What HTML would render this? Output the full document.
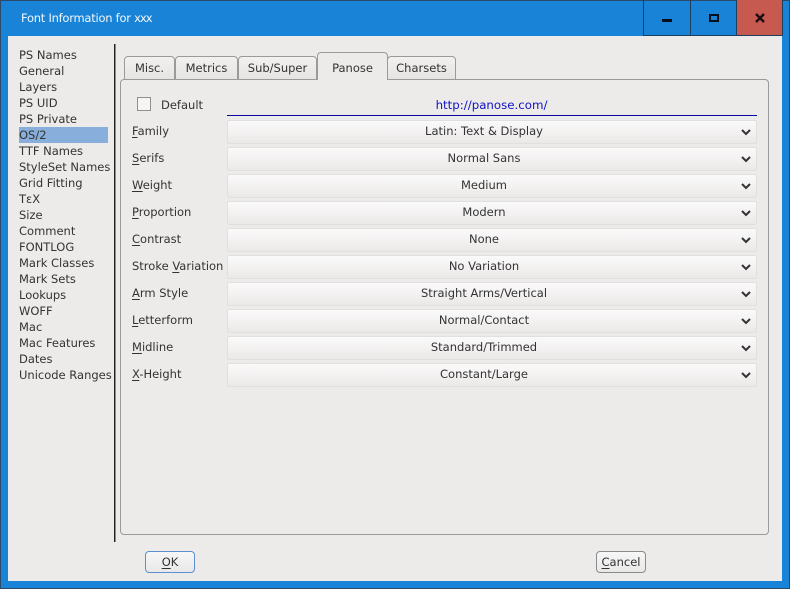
<!DOCTYPE html>
<html><head><meta charset="utf-8"><style>
html,body{margin:0;padding:0}
body{width:790px;height:589px;overflow:hidden;position:relative;background:#1883d7;font:11.5px "DejaVu Sans",sans-serif;color:#333}
div{position:absolute;box-sizing:border-box}
.t{white-space:nowrap}
.l{left:19px;height:16px;line-height:16px;white-space:nowrap}
.lb{left:132px;height:16px;line-height:16px;white-space:nowrap}
u{text-underline-offset:2px}
.s{left:227px;width:530px;height:24px;border:1px solid #e2e0de;border-radius:2px;background:linear-gradient(#fbfafa,#ebe9e8);text-align:center;line-height:20px;padding-right:16px}
.s svg{position:absolute;left:513px;top:8px}
.tab{top:56px;height:24px;border:1px solid #9a9a98;border-bottom:1px solid #9a9a98;border-radius:4px 4px 0 0;background:linear-gradient(#f2f1f0,#e6e4e2);text-align:center;line-height:22px}
.btn{top:551px;height:22px;border-radius:4px;text-align:center;line-height:20px;background:linear-gradient(#f8f7f7,#e9e8e8)}
</style></head><body>
<div style="left:0;top:0;width:790px;height:1px;background:#2a4a68"></div>
<div style="left:0;top:588px;width:790px;height:1px;background:#2a4a68"></div>
<div style="left:0;top:0;width:1px;height:589px;background:#2a4a68"></div>
<div style="left:789px;top:0;width:1px;height:589px;background:#2a4a68"></div>
<div class="t" style="left:21px;top:10px;color:#f2f6fb;font-size:11.5px;letter-spacing:-.25px;line-height:16px">Font Information for <span style="letter-spacing:-1px">xxx</span></div>
<div style="left:643px;top:0;width:1px;height:36px;background:#1d3f5e"></div>
<div style="left:690px;top:0;width:1px;height:36px;background:#1d3f5e"></div>
<div style="left:736px;top:0;width:47px;height:36px;background:#c75a50;border-left:1px solid #1d3f5e;border-right:1px solid #1d3f5e"></div>
<div style="left:643px;top:35px;width:140px;height:1px;background:#1d3f5e"></div>
<div style="left:662px;top:19px;width:10px;height:3px;background:#06101c"></div>
<div style="left:709px;top:14px;width:10px;height:8px;border:2px solid #06101c"></div>
<svg style="position:absolute;left:755px;top:13px" width="10" height="10" viewBox="0 0 10 10"><path d="M1 1L9 9M9 1L1 9" stroke="#1a0c10" stroke-width="2.4" fill="none"/></svg>

<div style="left:8px;top:36px;width:774px;height:545px;background:#edebe9"></div>
<div class="l" style="top:47px">PS Names</div>
<div class="l" style="top:63px">General</div>
<div class="l" style="top:79px">Layers</div>
<div class="l" style="top:95px">PS UID</div>
<div class="l" style="top:111px">PS Private</div>
<div class="l" style="top:127px;width:89px;background:#88aedb;color:#333">OS/2</div>
<div class="l" style="top:143px">TTF Names</div>
<div class="l" style="top:159px">StyleSet Names</div>
<div class="l" style="top:175px">Grid Fitting</div>
<div class="l" style="top:191px">TεX</div>
<div class="l" style="top:207px">Size</div>
<div class="l" style="top:223px">Comment</div>
<div class="l" style="top:239px">FONTLOG</div>
<div class="l" style="top:255px">Mark Classes</div>
<div class="l" style="top:271px">Mark Sets</div>
<div class="l" style="top:287px">Lookups</div>
<div class="l" style="top:303px">WOFF</div>
<div class="l" style="top:319px">Mac</div>
<div class="l" style="top:335px">Mac Features</div>
<div class="l" style="top:351px">Dates</div>
<div class="l" style="top:367px">Unicode Ranges</div>
<div style="left:114px;top:44px;width:1px;height:498px;background:#222"></div>
<div style="left:115px;top:44px;width:1px;height:498px;background:#8a8a8a"></div>

<div style="left:120px;top:79px;width:649px;height:456px;border:1px solid #9a9a98;border-radius:4px;background:#edebe9"></div>
<div class="tab" style="left:124px;width:51px">Misc.</div>
<div class="tab" style="left:175px;width:63px">Metrics</div>
<div class="tab" style="left:238px;width:79px">Sub/Super</div>
<div class="tab" style="left:387px;width:69px">Charsets</div>
<div class="tab" style="left:317px;top:52px;width:71px;height:28px;background:#edebe9;border-bottom:0;line-height:30px">Panose</div>

<div style="left:137px;top:97px;width:14px;height:14px;border:1px solid #8e8e8e;background:#f6f5f5"></div>
<div class="t" style="left:161px;top:97px;line-height:16px">Default</div>
<div class="t" style="left:227px;top:97px;width:530px;text-align:center;line-height:16px;color:#1212c8;font-size:11.8px;padding-right:1px">http://panose.com/</div>
<div style="left:227px;top:115px;width:530px;height:1px;background:#0808a0"></div>

<div class="lb" style="top:123px"><u>F</u>amily</div>
<div class="lb" style="top:150px"><u>S</u>erifs</div>
<div class="lb" style="top:177px"><u>W</u>eight</div>
<div class="lb" style="top:204px"><u>P</u>roportion</div>
<div class="lb" style="top:231px"><u>C</u>ontrast</div>
<div class="lb" style="top:258px">Stroke <u>V</u>ariation</div>
<div class="lb" style="top:285px"><u>A</u>rm Style</div>
<div class="lb" style="top:312px"><u>L</u>etterform</div>
<div class="lb" style="top:339px"><u>M</u>idline</div>
<div class="lb" style="top:366px"><u>X</u>-Height</div>

<div class="s" style="top:120px">Latin: Text &amp; Display<svg width="10" height="7"><path d="M1 1L5 5L9 1" stroke="#333" stroke-width="2" fill="none"/></svg></div>
<div class="s" style="top:147px">Normal Sans<svg width="10" height="7"><path d="M1 1L5 5L9 1" stroke="#333" stroke-width="2" fill="none"/></svg></div>
<div class="s" style="top:174px">Medium<svg width="10" height="7"><path d="M1 1L5 5L9 1" stroke="#333" stroke-width="2" fill="none"/></svg></div>
<div class="s" style="top:201px">Modern<svg width="10" height="7"><path d="M1 1L5 5L9 1" stroke="#333" stroke-width="2" fill="none"/></svg></div>
<div class="s" style="top:228px">None<svg width="10" height="7"><path d="M1 1L5 5L9 1" stroke="#333" stroke-width="2" fill="none"/></svg></div>
<div class="s" style="top:255px">No Variation<svg width="10" height="7"><path d="M1 1L5 5L9 1" stroke="#333" stroke-width="2" fill="none"/></svg></div>
<div class="s" style="top:282px">Straight Arms/Vertical<svg width="10" height="7"><path d="M1 1L5 5L9 1" stroke="#333" stroke-width="2" fill="none"/></svg></div>
<div class="s" style="top:309px">Normal/Contact<svg width="10" height="7"><path d="M1 1L5 5L9 1" stroke="#333" stroke-width="2" fill="none"/></svg></div>
<div class="s" style="top:336px">Standard/Trimmed<svg width="10" height="7"><path d="M1 1L5 5L9 1" stroke="#333" stroke-width="2" fill="none"/></svg></div>
<div class="s" style="top:363px">Constant/Large<svg width="10" height="7"><path d="M1 1L5 5L9 1" stroke="#333" stroke-width="2" fill="none"/></svg></div>

<div class="btn" style="left:145px;width:50px;border:1px solid #5b8fd0"><u>O</u>K</div>
<div class="btn" style="left:596px;width:50px;border:1px solid #8a8a88"><u>C</u>ancel</div>
</body></html>
